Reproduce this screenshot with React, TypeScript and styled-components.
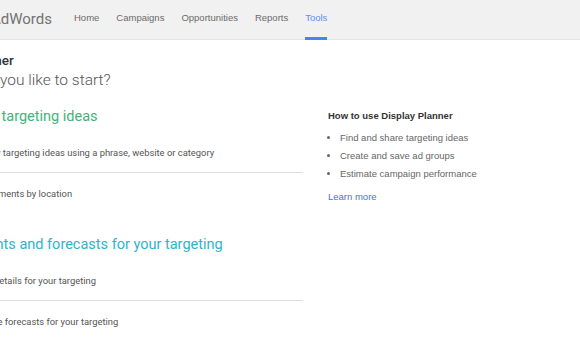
import styled, { createGlobalStyle } from 'styled-components'

const Global = createGlobalStyle`
    html, body {
        margin: 0;
        padding: 0;
        background: #fff;
        overflow: hidden;
    }
`

const Header = styled.header`
    height: 39px;
    background: #f1f1f1;
    border-bottom: 1px solid #e4e4e4;
    display: flex;
    align-items: stretch;
    margin-left: -105px;
`

const Logo = styled.div`
    display: flex;
    align-items: center;
    justify-content: flex-end;
    font-family: Roboto, "Liberation Sans", sans-serif;
    font-size: 15px;
    color: #737373;
    width: 179px;
    padding: 0 22px 2px 0;
    box-sizing: border-box;
    white-space: nowrap;
`

const Nav = styled.nav`
    display: flex;
    gap: 17px;
`

const NavItem = styled.a<{ $active?: boolean }>`
    display: flex;
    align-items: center;
    padding-bottom: 2px;
    font-family: "Liberation Sans", Arial, sans-serif;
    font-size: 9.5px;
    text-decoration: none;
    color: ${p => p.$active ? '#5a8ff0' : '#6a6a6a'};
    border-bottom: 3px solid ${p => p.$active ? '#4285f4' : 'transparent'};
    margin-bottom: -1px;
`

const Body = styled.main`
    display: grid;
    grid-template-columns: 403px 1fr;
    column-gap: 25px;
    margin-left: -100px;
`

const Left = styled.section`
    font-family: Roboto, "Liberation Sans", sans-serif;
    padding-top: 12px;
    white-space: nowrap;
`

const Title = styled.h1`
    margin: 0 0 0 20px;
    font-size: 13.5px;
    font-weight: 500;
    color: #333;
    line-height: 16px;
`

const Subtitle = styled.h2`
    margin: 2px 0 0 8px;
    font-size: 15.5px;
    font-weight: 300;
    color: #555;
    line-height: 20px;
`

const Group = styled.div<{ $top: number }>`
    margin-top: ${p => p.$top}px;
`

const GroupTitle = styled.h3<{ $color: string; $indent: number }>`
    margin: 0 0 0 ${p => p.$indent}px;
    font-size: 14.5px;
    font-weight: 400;
    color: ${p => p.$color};
    line-height: 18px;
`

const Options = styled.ul`
    list-style: none;
    margin: 6px 0 0;
    padding: 0;
`

const Option = styled.li<{ $indent: number }>`
    height: 40px;
    display: flex;
    align-items: center;
    padding-left: ${p => p.$indent}px;
    font-size: 9.4px;
    color: #555;
    & + & {
        border-top: 1px solid #dedede;
    }
`

const Right = styled.aside`
    font-family: "Liberation Sans", Arial, sans-serif;
    font-size: 9.5px;
    padding-top: 70px;
`

const HelpTitle = styled.div`
    font-weight: bold;
    color: #333;
    line-height: 12px;
`

const HelpList = styled.ul`
    margin: 7px 0 0;
    padding: 0 0 0 12px;
    color: #666;

    li {
        line-height: 18px;
    }
`

const LearnMore = styled.a`
    display: block;
    margin-top: 8px;
    color: #4a72d8;
    text-decoration: none;
`

const groups = [
    {
        title: 'Find new targeting ideas',
        color: '#3fb47a',
        top: 18,
        indent: 40,
        options: [
            { text: 'Search for new targeting ideas using a phrase, website or category', indent: 38 },
            { text: 'Browse placements by location', indent: 42 },
        ],
    },
    {
        title: 'Get insights and forecasts for your targeting',
        color: '#2cb4cf',
        top: 23,
        indent: 39,
        options: [
            { text: 'Get placement details for your targeting', indent: 31 },
            { text: 'Get performance forecasts for your targeting', indent: 32 },
        ],
    },
]

export default function App() {
    const tabs = ['Home', 'Campaigns', 'Opportunities', 'Reports', 'Tools']

    return (
        <>
            <Global />
            <Header>
                <Logo>Google AdWords</Logo>
                <Nav>
                    {tabs.map(t => <NavItem key={t} href="#" $active={t === 'Tools'}>{t}</NavItem>)}
                </Nav>
            </Header>
            <Body>
                <Left>
                    <Title>Display Planner</Title>
                    <Subtitle>Where would you like to start?</Subtitle>
                    {groups.map(g => (
                        <Group key={g.title} $top={g.top}>
                            <GroupTitle $color={g.color} $indent={g.indent}>{g.title}</GroupTitle>
                            <Options>
                                {g.options.map(o => <Option key={o.text} $indent={o.indent}>{o.text}</Option>)}
                            </Options>
                        </Group>
                    ))}
                </Left>
                <Right>
                    <HelpTitle>How to use Display Planner</HelpTitle>
                    <HelpList>
                        <li>Find and share targeting ideas</li>
                        <li>Create and save ad groups</li>
                        <li>Estimate campaign performance</li>
                    </HelpList>
                    <LearnMore href="#">Learn more</LearnMore>
                </Right>
            </Body>
        </>
    )
}
